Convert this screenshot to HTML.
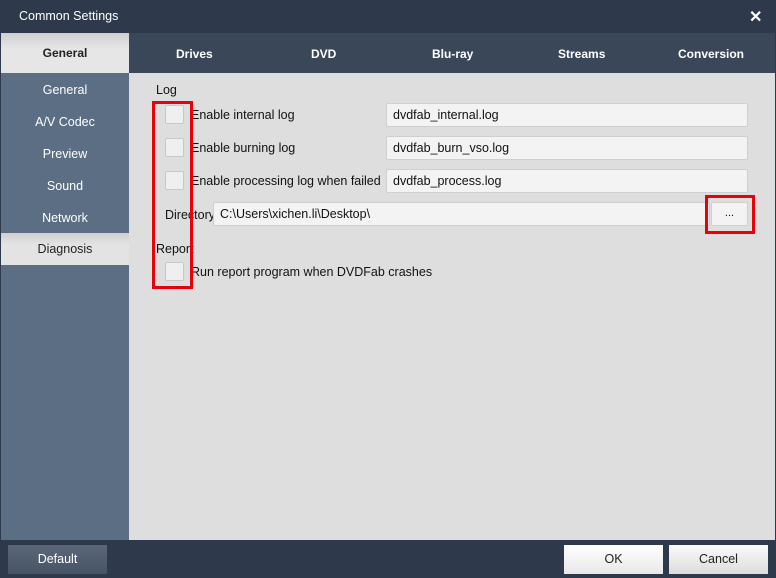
<!DOCTYPE html>
<html><head><style>
*{margin:0;padding:0;box-sizing:border-box}
body{width:776px;height:578px;background:#2e3a4b;font-family:"Liberation Sans",sans-serif;font-size:12px;position:relative;overflow:hidden}
.a{position:absolute}
.title{left:19px;top:9px;color:#fff;font-size:12.5px}
.side{left:1px;top:33px;width:128px;height:507px;background:#5b6e84}
.tabs{left:129px;top:33px;width:646px;height:40px;background:#3a4759}
.content{left:129px;top:73px;width:646px;height:467px;background:#dedede}
.tab{top:47px;color:#fff;font-weight:bold;font-size:12px}
.si{left:1px;width:128px;text-align:center;color:#fff;font-size:12.5px}
.cb{width:19px;height:19px;background:#efefef;border:1px solid #c8c8c8;border-radius:2px}
.inp{background:#f3f3f3;border:1px solid #cfcfcf;border-radius:2px;height:24px;padding:4px 6px;font-size:12.5px;color:#111}
.lbl{font-size:12.5px;color:#111}
.red{border:3px solid #e8000b}
.btn{height:29px;text-align:center;line-height:29px;font-size:12.5px}
</style></head><body>
<div class="a title">Common Settings</div>
<div class="a" style="left:749px;top:7px;color:#fff;font-weight:bold;font-size:16px">✕</div>
<div class="a side"></div>
<div class="a" style="left:1px;top:33px;width:128px;height:40px;background:linear-gradient(#cfcfcf,#e6e6e6 40%,#e6e6e6);text-align:center;line-height:40px;font-weight:bold;color:#222">General</div>
<div class="a si" style="top:83px">General</div>
<div class="a si" style="top:115px">A/V Codec</div>
<div class="a si" style="top:147px">Preview</div>
<div class="a si" style="top:179px">Sound</div>
<div class="a si" style="top:211px">Network</div>
<div class="a" style="left:1px;top:233px;width:128px;height:32px;background:linear-gradient(#cfcfcf,#e3e3e3 35%,#e3e3e3);text-align:center;line-height:32px;color:#222;font-size:12.5px">Diagnosis</div>
<div class="a tabs"></div>
<div class="a tab" style="left:176px">Drives</div>
<div class="a tab" style="left:311px">DVD</div>
<div class="a tab" style="left:432px">Blu-ray</div>
<div class="a tab" style="left:558px">Streams</div>
<div class="a tab" style="left:678px">Conversion</div>
<div class="a content"></div>
<div class="a lbl" style="left:156px;top:83px">Log</div>
<div class="a cb" style="left:165px;top:105px"></div>
<div class="a cb" style="left:165px;top:138px"></div>
<div class="a cb" style="left:165px;top:171px"></div>
<div class="a cb" style="left:165px;top:262px"></div>
<div class="a lbl" style="left:191px;top:108px">Enable internal log</div>
<div class="a lbl" style="left:191px;top:141px">Enable burning log</div>
<div class="a lbl" style="left:191px;top:174px">Enable processing log when failed</div>
<div class="a inp" style="left:386px;top:103px;width:362px">dvdfab_internal.log</div>
<div class="a inp" style="left:386px;top:136px;width:362px">dvdfab_burn_vso.log</div>
<div class="a inp" style="left:386px;top:169px;width:362px">dvdfab_process.log</div>
<div class="a lbl" style="left:165px;top:208px">Directory</div>
<div class="a inp" style="left:213px;top:202px;width:497px">C:\Users\xichen.li\Desktop\</div>
<div class="a inp" style="left:711px;top:202px;width:37px;text-align:center;padding:4px 0;font-size:11px">...</div>
<div class="a lbl" style="left:156px;top:242px">Report</div>
<div class="a lbl" style="left:191px;top:265px">Run report program when DVDFab crashes</div>
<div class="a red" style="left:152px;top:101px;width:41px;height:188px"></div>
<div class="a red" style="left:705px;top:195px;width:50px;height:39px"></div>
<div class="a btn" style="left:8px;top:545px;width:99px;background:linear-gradient(#5a6778,#475466);color:#fff">Default</div>
<div class="a btn" style="left:564px;top:545px;width:99px;background:linear-gradient(#fff,#e8e8e8);color:#222">OK</div>
<div class="a btn" style="left:669px;top:545px;width:99px;background:linear-gradient(#fafafa,#dcdcdc);color:#222">Cancel</div>
</body></html>
